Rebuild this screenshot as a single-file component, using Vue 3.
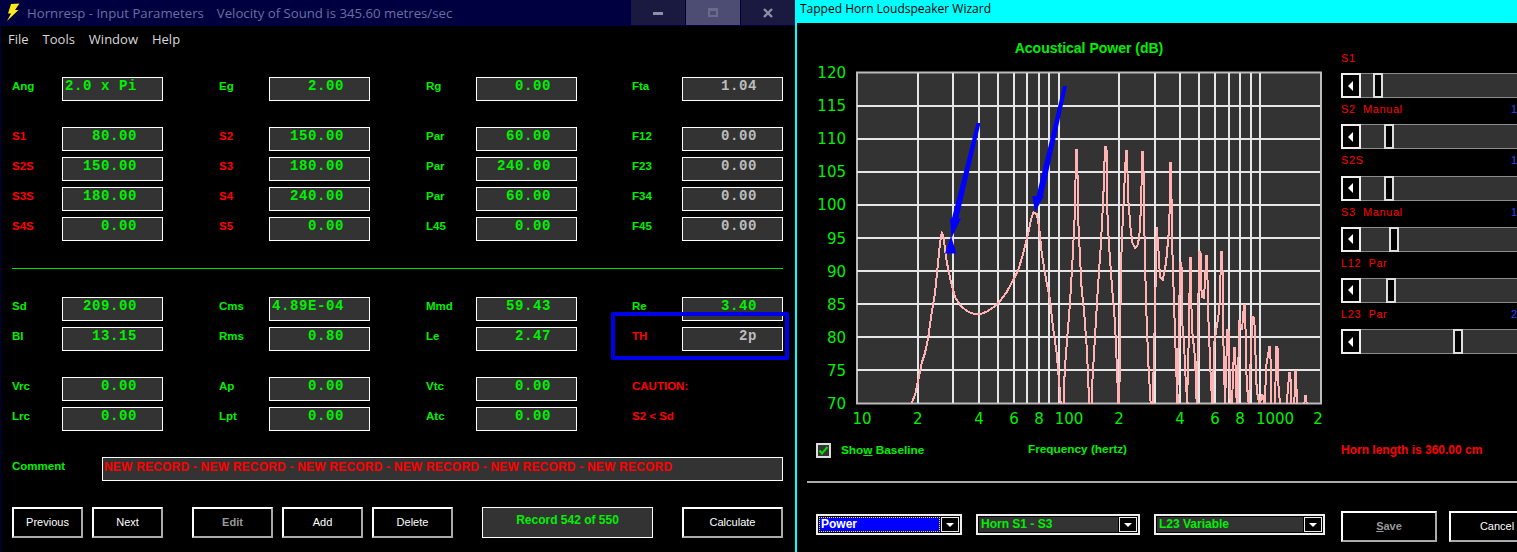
<script setup>
const green = 'green'
const red = 'red'
const gray = 'gray'

// each group is a block of rows, each cell: label, label colour, value, value colour
const groups = [
  [
    [['Ang', green, '2.0 x Pi', green], ['Eg', green, '2.00', green], ['Rg', green, '0.00', green], ['Fta', green, '1.04', gray]]
  ],
  [
    [['S1', red, '80.00', green], ['S2', red, '150.00', green], ['Par', green, '60.00', green], ['F12', green, '0.00', gray]],
    [['S2S', red, '150.00', green], ['S3', red, '180.00', green], ['Par', green, '240.00', green], ['F23', green, '0.00', gray]],
    [['S3S', red, '180.00', green], ['S4', red, '240.00', green], ['Par', green, '60.00', green], ['F34', green, '0.00', gray]],
    [['S4S', red, '0.00', green], ['S5', red, '0.00', green], ['L45', green, '0.00', green], ['F45', green, '0.00', gray]]
  ],
  [
    [['Sd', green, '209.00', green], ['Cms', green, '4.89E-04', green], ['Mmd', green, '59.43', green], ['Re', green, '3.40', green]],
    [['Bl', green, '13.15', green], ['Rms', green, '0.80', green], ['Le', green, '2.47', green], ['TH', red, '2p', gray]]
  ],
  [
    [['Vrc', green, '0.00', green], ['Ap', green, '0.00', green], ['Vtc', green, '0.00', green], ['CAUTION:', red, null, null]],
    [['Lrc', green, '0.00', green], ['Lpt', green, '0.00', green], ['Atc', green, '0.00', green], ['S2 < Sd', red, null, null]]
  ]
]

const comment = Array(6).fill('NEW RECORD').join(' - ')

const sliders = [
  { label: 'S1', value: '', pos: 32 },
  { label: 'S2  Manual', value: '1', pos: 43 },
  { label: 'S2S', value: '1', pos: 43 },
  { label: 'S3  Manual', value: '1', pos: 48 },
  { label: 'L12  Par', value: '', pos: 45 },
  { label: 'L23  Par', value: '2', pos: 112 }
]

const dbLabels = [120, 115, 110, 105, 100, 95, 90, 85, 80, 75, 70]
const rowY = dbLabels.map((_, i) => 72.5 + i * 33.1)
const colX = [917.7, 953, 979, 998, 1014, 1026.7, 1039, 1049, 1058.7, 1119, 1155, 1180, 1199, 1215, 1229, 1240, 1251, 1260]
const freqLabels = [
  ['10', 862], ['2', 917.7], ['4', 979], ['6', 1014], ['8', 1039], ['100', 1069],
  ['2', 1119], ['4', 1180], ['6', 1215], ['8', 1240], ['1000', 1275], ['2', 1318]
]

// traced in screen pixels, one string per arch of the response
const curves = [
  '911.7,403 915,395 918.3,380 921.7,363 925,353 928.3,337 931.7,313 935,293 937.3,270 940,243 941.7,233 943.3,235 946,257 948.3,270 951.7,285 955,297 960,305 966.7,311 971,313 976.7,314.5 981.7,313.7 986.7,311.7 993.3,307.3 1000,301 1006.7,292 1013.3,280 1018.3,270 1023.3,253 1028.3,233 1031,220 1033.3,212.5 1036.7,214 1039,226 1041.7,253 1046.7,283 1050,300 1053,327 1056.7,353 1060,393 1060.7,404',
  '1064,404 1064.3,380 1065.7,357 1070,303 1072.7,257 1075,210 1076,150 1077.3,150 1077.8,210 1079.3,243 1081.7,290 1084,310 1086.7,347 1088.3,380 1089,404',
  '1091.7,404 1092.3,383 1095,337 1097.3,297 1100.7,247 1103.3,198 1105,147 1106.5,147 1106.7,198 1108.7,240 1111.7,283 1115,323 1117.3,377 1118.3,404',
  '1119.3,404 1120,330 1121.7,243 1125,173 1126,151 1127.3,151 1127.7,193 1130.7,230 1132.5,243 1135,248 1137.5,245 1139.3,237 1141,207 1142.3,152 1143.3,152 1144,213 1146,303 1148.3,363 1150.7,404',
  '1152.7,404 1155,313 1156.7,227 1158.3,247 1160,277 1162.7,280 1166,263 1169.3,227 1170.3,163 1171.3,163 1171.7,230 1174,303 1176.7,383 1178.3,404',
  '1177,404 1179,330 1180,263 1181.5,263 1181.7,317 1184,343 1186,387 1187.7,404',
  '1187,404 1189,330 1190,258 1191,258 1191.7,327 1195,357 1196.7,404',
  '1197,404 1198,320 1199.3,252 1200.5,252 1201.7,297 1204,298 1206.3,256 1207,256 1208.3,317 1210.7,377 1212.3,404',
  '1212.5,404 1214.3,343 1216.7,327 1219.3,310 1221.3,252 1222.3,252 1223.3,337 1225,404',
  '1225,404 1227.3,330 1228.5,330 1229.3,363 1230.7,404',
  '1232,404 1234,348 1235,348 1236.7,404',
  '1237.5,404 1239.3,320 1242,330 1244,305 1245,305 1246.7,383 1248.7,404',
  '1249,404 1252.3,317 1254.3,318 1256.7,390 1259.3,404',
  '1260,404 1261.7,395 1263,396 1264,404',
  '1265,404 1266,367 1269.3,347 1270.3,347 1271.3,404',
  '1275,404 1276.3,347 1277.5,347 1278.3,383 1280,404',
  '1286.7,404 1289.3,373 1290.3,373 1291.3,404',
  '1294.3,404 1295.3,371 1296.3,371 1296.7,404',
  '1304.3,404 1305.3,396 1306,396 1306.7,404'
]
</script>

<template>
  <div class="screen">
    <!-- Hornresp input window -->
    <div class="hornresp">
      <div class="titlebar">
        <svg class="bolt" width="16" height="20" viewBox="0 0 16 20">
          <path d="M5 1 L13.5 0.5 L9 7 L12.5 7 L1 18 L5 10.5 L2 10.5 Z" fill="#ffe81a" />
        </svg>
        <span class="title-text">Hornresp - Input Parameters</span>
        <span class="title-text velocity">Velocity of Sound is 345.60 metres/sec</span>
        <div class="win-buttons">
          <div class="win-btn"><span class="ico-min"></span></div>
          <div class="win-btn max"><span class="ico-max"></span></div>
          <div class="win-btn">
            <svg width="10" height="10" viewBox="0 0 10 10">
              <path d="M1 1 L9 9 M9 1 L1 9" stroke="#8f8fa8" stroke-width="2.4" />
            </svg>
          </div>
        </div>
      </div>

      <div class="menu">
        <span>File</span>
        <span>Tools</span>
        <span>Window</span>
        <span>Help</span>
      </div>

      <div class="form">
        <div v-for="(group, g) in groups" :key="g" class="group" :class="'group-' + g">
          <div v-for="(row, r) in group" :key="r" class="row">
            <div v-for="(cell, c) in row" :key="c" class="field">
              <span class="label" :class="cell[1]">{{ cell[0] }}</span>
              <span v-if="cell[2]" class="box" :class="cell[3]">{{ cell[2] }}</span>
            </div>
          </div>
        </div>

        <div class="comment-row">
          <span class="label green comment-label">Comment</span>
          <div class="comment-box">{{ comment }}</div>
        </div>

        <div class="actions">
          <div class="btn w71">Previous</div>
          <div class="btn w71">Next</div>
          <div class="btn w81 lead disabled">Edit</div>
          <div class="btn w81">Add</div>
          <div class="btn w81">Delete</div>
          <div class="record">Record 542 of 550</div>
          <div class="btn calc">Calculate</div>
        </div>
      </div>

      <div class="highlight"></div>
    </div>

    <!-- Tapped horn wizard window -->
    <div class="wizard">
      <div class="wizard-title">Tapped Horn Loudspeaker Wizard</div>

      <div class="wizard-main">
        <div class="chart-col">
          <div class="chart-title">Acoustical Power (dB)</div>
          <svg class="chart" width="530" height="372" viewBox="800 60 530 372">
            <defs>
              <clipPath id="plot-clip">
                <rect x="857" y="72" width="464" height="332" />
              </clipPath>
            </defs>
            <rect x="857" y="72.5" width="464" height="331" fill="#333" stroke="#bbb" stroke-width="2" />
            <line v-for="y in rowY.slice(1, 10)" :key="y" x1="857" x2="1320" :y1="y" :y2="y" class="gridline" />
            <line v-for="x in colX" :key="x" :x1="x" :x2="x" y1="73" y2="403" class="gridline" />
            <g clip-path="url(#plot-clip)">
              <polyline v-for="(pts, i) in curves" :key="i" :points="pts" class="curve" />
            </g>
            <text v-for="(db, i) in dbLabels" :key="db" x="846" :y="rowY[i] + 5.5" text-anchor="end" class="axis">{{ db }}</text>
            <text v-for="(f, i) in freqLabels" :key="i" :x="f[1]" y="424" text-anchor="middle" class="axis">{{ f[0] }}</text>
            <!-- blue arrows drawn over the plot -->
            <g fill="#0000ff" stroke="none">
              <path d="M976.5 123 L980.5 123 L957.5 222 L951 222 Z" />
              <path d="M950 218.5 L961 218.5 L951.5 238 Z" />
              <path d="M945 253.5 L956.5 253.5 L951 236 Z" />
              <path d="M1063 86 L1067 86 L1042.5 198 L1036 198 Z" />
              <path d="M1032.3 196 L1044 196 L1035 212 Z" />
            </g>
          </svg>
          <div class="chart-foot">
            <label class="show-base">
              <span class="check">
                <svg width="11" height="11" viewBox="0 0 11 11">
                  <path d="M1.5 5.5 L4 8.5 L9.5 2" fill="none" stroke="#00e000" stroke-width="2" />
                </svg>
              </span>
              <span>Sho<u>w</u> Baseline</span>
            </label>
            <span class="freq">Frequency (hertz)</span>
          </div>
        </div>

        <div class="slider-col">
          <div v-for="s in sliders" :key="s.label" class="slider-item">
            <div class="slider-label">
              <span class="slider-name">{{ s.label }}</span>
              <span class="slider-value">{{ s.value }}</span>
            </div>
            <div class="slider">
              <div class="slider-btn"><span class="arrow-left"></span></div>
              <div class="thumb" :style="{ left: s.pos + 'px' }"></div>
            </div>
          </div>
          <div class="horn-length">Horn length is 360.00 cm</div>
        </div>
      </div>

      <div class="divider"></div>

      <div class="wizard-actions">
        <div class="combo c1 focused">
          <div class="combo-text">Power</div>
          <div class="combo-btn"><span class="arrow-down"></span></div>
        </div>
        <div class="combo c2">
          <div class="combo-text">Horn S1 - S3</div>
          <div class="combo-btn"><span class="arrow-down"></span></div>
        </div>
        <div class="combo c3">
          <div class="combo-text">L23 Variable</div>
          <div class="combo-btn"><span class="arrow-down"></span></div>
        </div>
        <div class="btn big disabled save"><span><u>S</u>ave</span></div>
        <div class="btn big cancel">Cancel</div>
      </div>
    </div>
  </div>
</template>

<style scoped>
.screen {
  display: flex;
  width: 1517px;
  height: 552px;
  overflow: hidden;
  background: #000;
  font-family: "Liberation Sans", Arial, sans-serif;
}

.hornresp {
  position: relative;
  width: 795px;
  flex: none;
  box-sizing: border-box;
  border-left: 1px solid #000040;
}

.titlebar {
  display: flex;
  align-items: center;
  height: 26px;
  background: #000040;
  font-family: "Open Sans", sans-serif;
  font-size: 13.2px;
  color: #6a6f9e;
}

.bolt {
  margin-left: 5px;
  margin-right: 5px;
}

.velocity {
  margin-left: 13px;
}

.win-buttons {
  display: flex;
  margin-left: auto;
  height: 25px;
  align-self: flex-start;
}

.win-btn {
  display: flex;
  align-items: center;
  justify-content: center;
  width: 54px;
  margin-left: 1px;
  background: #1a1a40;
}

.win-btn.max {
  background: #4d4d73;
}

.ico-min {
  width: 10px;
  height: 3px;
  margin-top: 2px;
  background: #8f8fa8;
}

.ico-max {
  width: 10px;
  height: 9px;
  box-sizing: border-box;
  border: 2px solid #6a6a8c;
  border-top-width: 3px;
}

.menu {
  display: flex;
  height: 25px;
  align-items: center;
  padding-left: 7px;
  gap: 14px;
  font-family: "Open Sans", sans-serif;
  font-size: 13px;
  color: #d8d8d8;
}

.form {
  padding: 26px 0 0 11px;
}

.group {
  display: flex;
  flex-direction: column;
  gap: 6px;
}

.group-1 {
  margin-top: 26px;
}

.group-2 {
  margin-top: 56px;
  position: relative;
}

.group-2::before {
  content: "";
  position: absolute;
  left: 0;
  top: -29px;
  width: 771px;
  height: 1px;
  background: #00e000;
}

.group-3 {
  margin-top: 26px;
}

.row {
  display: grid;
  grid-template-columns: 207px 207px 206px 151px;
}

.field {
  display: grid;
  grid-template-columns: 50px 101px;
  height: 24px;
}

.label {
  padding-top: 2px;
  font-size: 11.5px;
  font-weight: 700;
  line-height: 15px;
  white-space: nowrap;
}

.green {
  color: #00f000;
}

.red {
  color: #ff0000;
}

.gray {
  color: #bdbdbd;
}

.box {
  box-sizing: border-box;
  height: 24px;
  padding: 1px 25px 0 0;
  border: 1px solid #fff;
  background: #333;
  font-family: "Liberation Mono", monospace;
  font-size: 14px;
  font-weight: 700;
  line-height: 15px;
  letter-spacing: 0.6px;
  text-align: right;
  white-space: pre;
}

.comment-row {
  display: flex;
  margin-top: 26px;
}

.comment-label {
  width: 90px;
}

.comment-box {
  box-sizing: border-box;
  width: 681px;
  height: 24px;
  padding: 1px 0 0 1px;
  border: 1px solid #fff;
  background: #333;
  color: #ff0000;
  font-size: 12px;
  font-weight: 700;
  line-height: 16px;
  letter-spacing: 0.2px;
  white-space: nowrap;
}

.actions {
  display: flex;
  margin-top: 26px;
  gap: 9px;
}

.btn {
  display: flex;
  align-items: center;
  justify-content: center;
  box-sizing: border-box;
  height: 31px;
  padding-bottom: 2px;
  border: 2px solid;
  border-color: #fff #aaa #aaa #fff;
  background: #000;
  color: #fff;
  font-size: 11px;
}

.btn.disabled {
  color: #999;
  font-weight: 700;
}

.w71 {
  width: 71px;
}

.w81 {
  width: 81px;
}

.lead {
  margin-left: 20px;
}

.record {
  width: 171px;
  height: 31px;
  margin-left: 20px;
  box-sizing: border-box;
  padding-top: 5px;
  border: 1px solid #fff;
  background: #333;
  color: #00f000;
  font-size: 12px;
  font-weight: 700;
  text-align: center;
}

.calc {
  width: 101px;
  margin-left: 20px;
}

.highlight {
  position: absolute;
  left: 610px;
  top: 312px;
  width: 178px;
  height: 48px;
  box-sizing: border-box;
  border: 4px solid #0000e6;
  border-radius: 2px;
}

.wizard {
  flex: none;
  width: 722px;
  box-sizing: border-box;
  border-left: 2px solid #00ffff;
}

.wizard-title {
  height: 23px;
  margin-left: -2px;
  padding-left: 5px;
  background: #00ffff;
  color: #000;
  font-family: "Open Sans", sans-serif;
  font-size: 12px;
  line-height: 17px;
}

.wizard-main {
  display: flex;
  height: 458px;
}

.chart-col {
  width: 544px;
  flex: none;
  padding-left: 3px;
  box-sizing: border-box;
}

.chart-title {
  width: 578px;
  height: 37px;
  box-sizing: border-box;
  padding-top: 17px;
  color: #00f000;
  font-size: 14px;
  font-weight: 700;
  line-height: 16px;
  text-align: center;
}

.chart {
  display: block;
}

.gridline {
  stroke: #e6e6e6;
  stroke-width: 2;
  shape-rendering: crispEdges;
}

.curve {
  fill: none;
  stroke: #ffb3b3;
  stroke-width: 2;
  shape-rendering: crispEdges;
}

.axis {
  fill: #00f000;
  font-family: "DejaVu Sans", sans-serif;
  font-size: 15px;
}

.chart-foot {
  display: flex;
  align-items: center;
  height: 18px;
  margin-top: 9px;
  color: #00f000;
  font-size: 11.8px;
  font-weight: 700;
}

.show-base {
  display: flex;
  align-items: center;
  width: 212px;
  padding-left: 16px;
  gap: 10px;
}

.check {
  display: flex;
  align-items: center;
  justify-content: center;
  box-sizing: border-box;
  width: 15px;
  height: 15px;
  border: 2px solid #ddd;
  background: #333;
}

.freq {
  margin-top: -2px;
}

.slider-col {
  flex: none;
  width: 300px;
  padding-top: 24px;
}

.slider-item {
  height: 51.2px;
}

.slider-label {
  display: grid;
  grid-template-columns: 170px 20px;
  height: 26.2px;
  padding-top: 3px;
  box-sizing: border-box;
  color: #ff0000;
  font-size: 11px;
  line-height: 16px;
  letter-spacing: 0.6px;
  white-space: pre;
}

.slider-value {
  color: #2044ff;
}

.slider {
  position: relative;
  width: 300px;
  height: 25px;
  box-sizing: border-box;
  border-top: 1px solid #8c8c8c;
  border-bottom: 1px solid #8c8c8c;
  background: #333;
}

.slider-btn {
  position: absolute;
  left: 0;
  top: -1px;
  width: 20px;
  height: 25px;
  box-sizing: border-box;
  display: flex;
  align-items: center;
  padding-left: 5px;
  border: 2px solid #eee;
  background: #000;
}

.arrow-left {
  width: 0;
  height: 0;
  border-top: 5px solid transparent;
  border-bottom: 5px solid transparent;
  border-right: 5px solid #fff;
}

.thumb {
  position: absolute;
  top: -1px;
  width: 10px;
  height: 25px;
  box-sizing: border-box;
  border: 2px solid #ddd;
  background: #000;
}

.horn-length {
  margin-top: 88px;
  color: #ff0000;
  font-size: 12px;
  font-weight: 700;
  line-height: 16px;
}

.divider {
  height: 2px;
  margin-left: 10px;
  background: #aaa;
}

.wizard-actions {
  display: flex;
  align-items: flex-start;
  margin-top: 28px;
  padding-left: 19px;
}

.combo {
  display: flex;
  flex: none;
  box-sizing: border-box;
  height: 21px;
  margin-top: 3px;
  padding: 1px;
  border: 2px solid #eee;
  background: #000;
  margin-right: 14px;
}

.c1 {
  width: 146px;
}

.c2 {
  width: 164px;
}

.c3 {
  width: 171px;
  margin-right: 16px;
}

.combo-text {
  flex: 1;
  padding-left: 2px;
  background: #333;
  color: #00f000;
  font-size: 12px;
  font-weight: 700;
  line-height: 15px;
}

.focused .combo-text {
  background: #0000ff;
  color: #fff;
  outline: 1px dotted #ffe800;
  outline-offset: -1px;
}

.combo-btn {
  display: flex;
  align-items: center;
  justify-content: center;
  box-sizing: border-box;
  width: 18px;
  margin-left: 1px;
  border: 1px solid #eee;
  background: #000;
}

.arrow-down {
  width: 0;
  height: 0;
  border-left: 4px solid transparent;
  border-right: 4px solid transparent;
  border-top: 4px solid #fff;
}

.big {
  flex: none;
  width: 96px;
}

.cancel {
  margin-left: 12px;
}
</style>

<style>
html,
body {
  background: #000;
}
</style>
